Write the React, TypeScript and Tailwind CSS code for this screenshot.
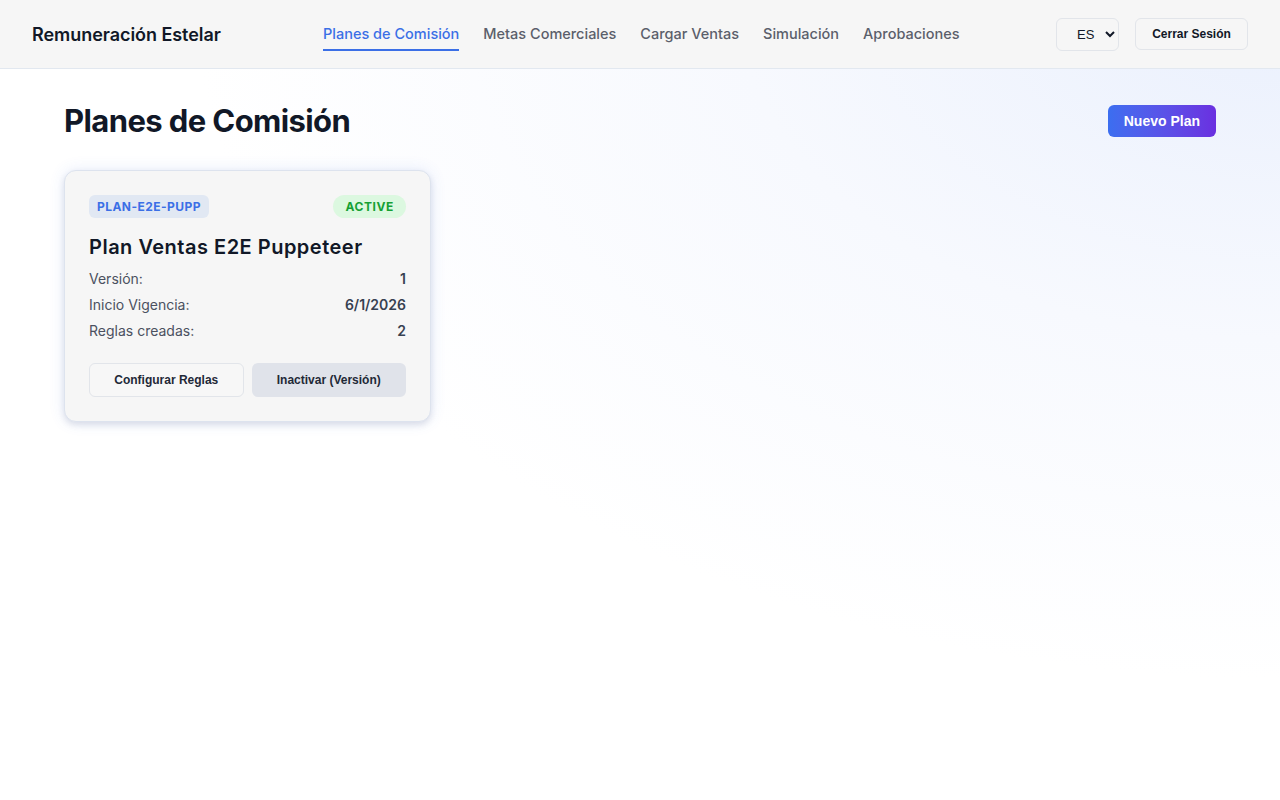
import React from "react";

const navItems = [
  "Planes de Comisión",
  "Metas Comerciales",
  "Cargar Ventas",
  "Simulación",
  "Aprobaciones",
];

const grotesk = { fontFamily: "Inter, 'Noto Sans', sans-serif" };

function Header() {
  return (
    <header className="h-[69px] bg-[#f6f6f6] border-b border-[#e2e8f0] flex items-center px-8">
      <div className="w-[291px] text-[18px] font-semibold text-[#111827] tracking-[-0.05px]">
        Remuneración Estelar
      </div>
      <nav className="flex-1 flex items-center gap-6 h-full">
        {navItems.map((item, i) => (
          <a
            key={item}
            className={
              i === 0
                ? "h-full flex items-center text-[14.5px] font-medium text-[#3b6fe6] relative"
                : "h-full flex items-center text-[14.5px] font-medium text-[#5b5f6b]"
            }
          >
            {item}
            {i === 0 && (
              <span className="absolute left-0 right-0 bottom-[17px] h-[2px] bg-[#3b6fe6]" />
            )}
          </a>
        ))}
      </nav>
      <div className="flex items-center gap-4">
        <select
          className="h-[33px] w-[63px] rounded-md border border-[#e2e5ea] bg-[#f6f6f6] pl-4 text-[13px] text-[#111827]"
          style={{ fontFamily: "'Liberation Sans', Arial, sans-serif" }}
          defaultValue="ES"
        >
          <option>ES</option>
          <option>EN</option>
        </select>
        <button
          className="h-[32px] w-[113px] rounded-md border border-[#e2e5ea] bg-[#f6f6f6] text-[12px] font-bold text-[#111827]"
          style={{ fontFamily: "'Liberation Sans', Arial, sans-serif" }}
        >
          Cerrar Sesión
        </button>
      </div>
    </header>
  );
}

function Row({ label, value }: { label: string; value: string }) {
  return (
    <div className="flex justify-between items-center h-[26px] text-[14px]">
      <span className="text-[#4b5160]">{label}</span>
      <span className="font-semibold text-[#374151]">{value}</span>
    </div>
  );
}

function PlanCard() {
  return (
    <div className="w-[367px] rounded-xl border border-[#dde3ee] bg-[#f6f6f6] p-6 shadow-[0_3px_6px_rgba(30,41,80,0.12),0_0_16px_rgba(59,111,230,0.12)]">
      <div className="flex justify-between items-center">
        <span className="rounded-md bg-[#e1e8f3] px-2 h-[23px] flex items-center text-[12px] font-bold tracking-[0.45px] text-[#3b6fe6]">
          PLAN-E2E-PUPP
        </span>
        <span className="rounded-full bg-[#dcf8e0] px-3 h-[23px] flex items-center text-[12px] font-bold tracking-[0.6px] text-[#16a034]">
          ACTIVE
        </span>
      </div>
      <h2 className="mt-[14px] text-[20px] font-semibold text-[#111827] tracking-[0.5px]">
        Plan Ventas E2E Puppeteer
      </h2>
      <div className="mt-[3px]">
        <Row label="Versión:" value="1" />
        <Row label="Inicio Vigencia:" value="6/1/2026" />
        <Row label="Reglas creadas:" value="2" />
      </div>
      <div
        className="mt-[20px] grid grid-cols-2 gap-2"
        style={{ fontFamily: "'Liberation Sans', Arial, sans-serif" }}
      >
        <button className="h-[34px] rounded-md border border-[#e2e5ea] bg-[#f7f7f7] text-[12px] font-bold text-[#1f2937]">
          Configurar Reglas
        </button>
        <button className="h-[34px] rounded-md bg-[#e0e3ea] text-[12px] font-bold text-[#1f2937]">
          Inactivar (Versión)
        </button>
      </div>
    </div>
  );
}

export default function App() {
  return (
    <div
      className="min-h-[800px] bg-white bg-[radial-gradient(ellipse_at_top_right,#eaf0fd_0%,#f7f9fe_30%,#ffffff_60%)]"
      style={grotesk}
    >
      <Header />
      <main className="px-16 pt-[28px]">
        <div className="flex justify-between items-center">
          <h1 className="text-[31px] leading-[48px] font-bold text-[#111827] tracking-[-0.6px]">
            Planes de Comisión
          </h1>
          <button
            className="h-[32px] px-4 rounded-md bg-gradient-to-r from-[#3b6ef0] to-[#6a2fe0] text-white text-[14px] font-bold"
            style={{ fontFamily: "'Liberation Sans', Arial, sans-serif" }}
          >
            Nuevo Plan
          </button>
        </div>
        <div className="mt-[25px]">
          <PlanCard />
        </div>
      </main>
    </div>
  );
}
